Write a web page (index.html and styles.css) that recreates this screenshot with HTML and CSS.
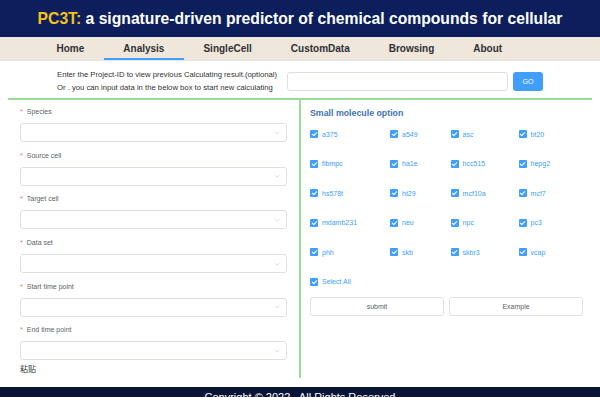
FILE: index.html
```html
<!DOCTYPE html>
<html lang="en">
<head>
  <meta charset="UTF-8">
  <meta name="viewport" content="width=device-width, initial-scale=1">
  <link rel="stylesheet" href="styles.css">
  <title>PC3T - Analysis</title>
</head>
<body>
  <header class="top">
    <h1><span class="brand">PC3T:</span> a signature-driven predictor of chemical compounds for cellular</h1>
  </header>

  <nav class="menu">
    <a href="#">Home</a>
    <a href="#" class="active">Analysis</a>
    <a href="#">SingleCell</a>
    <a href="#">CustomData</a>
    <a href="#">Browsing</a>
    <a href="#">About</a>
  </nav>

  <div class="project">
    <div class="project-tip">
      <p>Enter the Project-ID to view previous Calculating result.(optional)</p>
      <p>Or . you can input data in the below box to start new calculating</p>
    </div>
    <input type="text" class="project-input">
    <button class="go">GO</button>
  </div>

  <div class="main">
    <div class="form-panel">
      <div class="form-item">
        <div class="form-label"><span class="req">*</span>Species</div>
        <div class="select"><svg viewBox="0 0 10 6"><path d="M1 1l4 4 4-4"/></svg></div>
      </div>
      <div class="form-item">
        <div class="form-label"><span class="req">*</span>Source cell</div>
        <div class="select"><svg viewBox="0 0 10 6"><path d="M1 1l4 4 4-4"/></svg></div>
      </div>
      <div class="form-item">
        <div class="form-label"><span class="req">*</span>Target cell</div>
        <div class="select"><svg viewBox="0 0 10 6"><path d="M1 1l4 4 4-4"/></svg></div>
      </div>
      <div class="form-item">
        <div class="form-label"><span class="req">*</span>Data set</div>
        <div class="select"><svg viewBox="0 0 10 6"><path d="M1 1l4 4 4-4"/></svg></div>
      </div>
      <div class="form-item">
        <div class="form-label"><span class="req">*</span>Start time point</div>
        <div class="select"><svg viewBox="0 0 10 6"><path d="M1 1l4 4 4-4"/></svg></div>
      </div>
      <div class="form-item last">
        <div class="form-label"><span class="req">*</span>End time point</div>
        <div class="select"><svg viewBox="0 0 10 6"><path d="M1 1l4 4 4-4"/></svg></div>
      </div>
      <div class="paste">粘贴</div>
    </div>

    <div class="option-panel">
      <h3 class="option-title">Small molecule option</h3>
      <div class="cell-grid">
        <span class="check"><i class="box"></i>a375</span>
        <span class="check"><i class="box"></i>a549</span>
        <span class="check"><i class="box"></i>asc</span>
        <span class="check"><i class="box"></i>bt20</span>
        <span class="check"><i class="box"></i>fibmpc</span>
        <span class="check"><i class="box"></i>ha1e</span>
        <span class="check"><i class="box"></i>hcc515</span>
        <span class="check"><i class="box"></i>hepg2</span>
        <span class="check"><i class="box"></i>hs578t</span>
        <span class="check"><i class="box"></i>ht29</span>
        <span class="check"><i class="box"></i>mcf10a</span>
        <span class="check"><i class="box"></i>mcf7</span>
        <span class="check"><i class="box"></i>mdamb231</span>
        <span class="check"><i class="box"></i>neu</span>
        <span class="check"><i class="box"></i>npc</span>
        <span class="check"><i class="box"></i>pc3</span>
        <span class="check"><i class="box"></i>phh</span>
        <span class="check"><i class="box"></i>skb</span>
        <span class="check"><i class="box"></i>skbr3</span>
        <span class="check"><i class="box"></i>vcap</span>
      </div>
      <div class="select-all"><span class="check"><i class="box"></i>Select All</span></div>
      <div class="actions">
        <button class="btn">submit</button>
        <button class="btn">Example</button>
      </div>
    </div>
  </div>

  <footer class="foot">Copyright © 2022 . All Rights Reserved</footer>
</body>
</html>
```

FILE: styles.css
```css
* {
  margin: 0;
  padding: 0;
  box-sizing: border-box;
}
body {
  width: 600px;
  height: 397px;
  overflow: hidden;
  font-family: "Liberation Sans", Arial, Helvetica, sans-serif;
  background: #fff;
}
/* title bar */
.top {
  height: 37px;
  background: #0c1f5c;
  text-align: center;
}
.top h1 {
  font-size: 15.7px;
  line-height: 37px;
  color: #fff;
  font-weight: bold;
}
.brand {
  color: #f5c316;
}
/* menu */
.menu {
  height: 24px;
  background: #efe6dc;
  border-bottom: 1px solid #e6e6e6;
  padding-left: 37px;
  display: flex;
}
.menu a {
  display: block;
  padding: 0 19.5px;
  line-height: 23px;
  font-size: 10px;
  font-weight: bold;
  color: #303133;
  text-decoration: none;
  border-bottom: 2px solid transparent;
}
.menu a.active {
  border-bottom-color: #409eff;
}
/* project id row */
.project {
  display: flex;
  align-items: center;
  height: 19px;
  margin-top: 11px;
  padding-left: 57px;
}
.project-tip {
  width: 230px;
  font-size: 7.7px;
  line-height: 12.5px;
  color: #333;
  white-space: nowrap;
}
.project-input {
  width: 221px;
  height: 19px;
  border: 1px solid #dcdfe6;
  border-radius: 3px;
  outline: none;
}
.go {
  width: 30px;
  height: 19px;
  margin-left: 5px;
  border: none;
  border-radius: 3px;
  background: #409eff;
  color: #fff;
  font-size: 7px;
  font-family: inherit;
}
/* main panels */
.main {
  display: flex;
  margin: 7px 8px 0;
  border-top: 2px solid #97dc97;
}
.form-panel {
  flex-shrink: 0;
  width: 293px;
  padding: 6px 12px 1px;
  border-right: 2px solid #97dc97;
}
.form-item {
  margin-bottom: 7.7px;
}
.form-item.last {
  margin-bottom: 3px;
}
.form-label {
  height: 12px;
  line-height: 12px;
  font-size: 7px;
  color: #606266;
  margin-bottom: 5px;
}
.req {
  color: #f56c6c;
  margin-right: 4px;
}
.select {
  height: 19px;
  border: 1px solid #dcdfe6;
  border-radius: 3px;
  display: flex;
  align-items: center;
  justify-content: flex-end;
  padding-right: 6px;
}
.select svg {
  width: 6px;
  height: 4px;
  fill: none;
  stroke: #c0c4cc;
  stroke-width: 1;
}
.paste {
  font-family: "Liberation Sans", "Noto Sans CJK SC", sans-serif;
  font-size: 8px;
  line-height: 14px;
  color: #333;
}
.option-panel {
  flex: 1;
  padding: 6px 9px 0;
}
.option-title {
  font-size: 8.8px;
  line-height: 14px;
  color: #3f74b5;
  font-weight: bold;
  margin-bottom: 9px;
}
.cell-grid {
  display: grid;
  grid-template-columns: repeat(4, auto);
  justify-content: start;
  column-gap: 33px;
  row-gap: 19.5px;
}
.check {
  display: flex;
  align-items: center;
  height: 10px;
  font-size: 7px;
  color: #409eff;
  white-space: nowrap;
}
.box {
  position: relative;
  width: 8px;
  height: 8px;
  margin-right: 4px;
  border-radius: 1px;
  background: #409eff;
}
.box::after {
  content: "";
  position: absolute;
  left: 2.6px;
  top: 1px;
  width: 2px;
  height: 4px;
  border: solid #fff;
  border-width: 0 1px 1px 0;
  transform: rotate(45deg);
}
.select-all {
  margin-top: 19.5px;
}
.actions {
  display: flex;
  gap: 5px;
  margin-top: 10px;
}
.btn {
  width: 134px;
  height: 19px;
  border: 1px solid #dcdfe6;
  border-radius: 3px;
  background: #fff;
  color: #606266;
  font-size: 7px;
  font-family: inherit;
}
/* footer */
.foot {
  margin-top: 9px;
  height: 40px;
  background: #0a1434;
  color: #fff;
  text-align: center;
  font-size: 11px;
  padding-top: 4px;
}
```
